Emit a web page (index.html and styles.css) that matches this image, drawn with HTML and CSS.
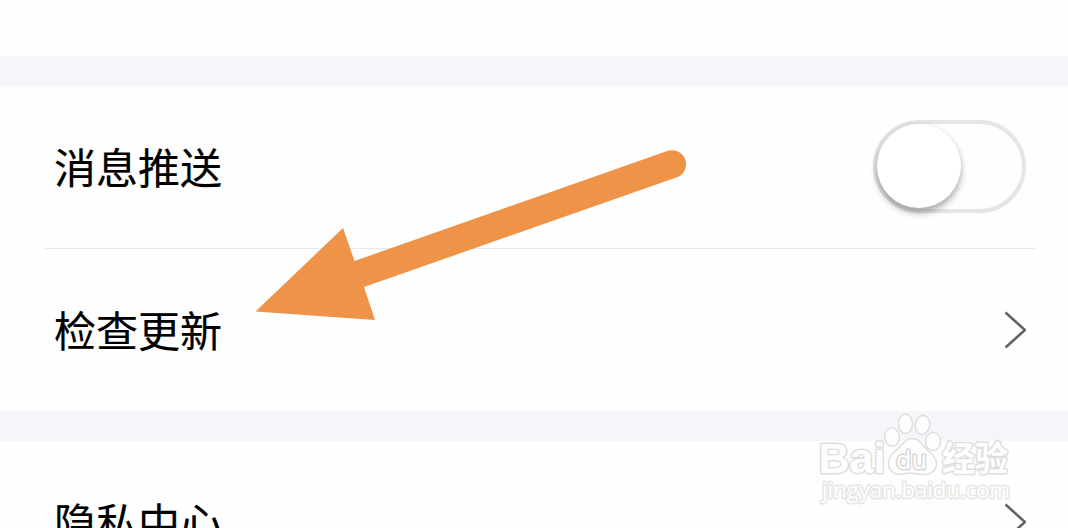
FILE: index.html
```
<!DOCTYPE html>
<html lang="zh-CN">
<head>
    <meta charset="UTF-8">
    <meta name="viewport" content="width=device-width, initial-scale=1.0">
    <title>设置</title>
    <link rel="stylesheet" href="styles.css">
</head>
<body>
    <div class="settings">
        <div class="group group-top"></div>
        <div class="group">
            <div class="row">
                <span class="label">消息推送</span>
                <div class="switch" role="switch" aria-checked="false">
                    <div class="knob"></div>
                </div>
            </div>
            <div class="divider"></div>
            <div class="row">
                <span class="label">检查更新</span>
                <svg class="chevron" width="24" height="40" viewBox="0 0 24 40">
                    <path d="M3.5 2.5 L23 20 L3.5 37.5"/>
                </svg>
            </div>
        </div>
        <div class="group">
            <div class="row">
                <span class="label">隐私中心</span>
                <svg class="chevron" width="24" height="40" viewBox="0 0 24 40">
                    <path d="M3.5 2.5 L23 20 L3.5 37.5"/>
                </svg>
            </div>
        </div>
    </div>

    <svg class="arrow" width="440" height="180" viewBox="250 145 440 180">
        <path d="M255.5 311.5 L343 228 L354.5 261 L668 150.8 A14 14 0 0 1 677 177.3 L364 287 L375 320 Z"/>
    </svg>

    <svg class="watermark" width="210" height="110" viewBox="810 408 210 110">
        <g class="paw">
            <ellipse cx="892" cy="437" rx="7.3" ry="9.3" transform="rotate(-8 892 437)"/>
            <ellipse cx="905.5" cy="423.8" rx="7" ry="9.8"/>
            <ellipse cx="922.5" cy="425" rx="7.2" ry="9.5" transform="rotate(12 922.5 425)"/>
            <ellipse cx="933" cy="441.5" rx="7.5" ry="9"/>
            <path d="M912 438.5 C904 439 902 446 896 450.5 C890 455 887 460 889 467 C892 476 900 474.5 906 473.5 Q912 473 918 474 C926 475.5 933 475 936 467 C938 460 934 456 928 450.5 C922 445 920 438.5 912 438.5 Z"/>
        </g>
        <text class="brand" x="818.5" y="472.5" textLength="67" lengthAdjust="spacingAndGlyphs">Bai</text>
        <text class="du" x="896" y="469" textLength="31" lengthAdjust="spacingAndGlyphs">du</text>
        <text class="brand brand-cn" x="942" y="471" textLength="66" lengthAdjust="spacingAndGlyphs">经验</text>
        <text class="site" x="822" y="498" textLength="188" lengthAdjust="spacingAndGlyphs">jingyan.baidu.com</text>
    </svg>
</body>
</html>
```

FILE: styles.css
```
html {
    overflow: hidden;
}

body {
    margin: 0;
    height: 528px;
    overflow: hidden;
    position: relative;
    background-color: #f5f6fa;
    font-family: "Noto Sans CJK SC", sans-serif;
    color: #000;
}

.settings {
    display: flex;
    flex-direction: column;
    gap: 30px;
    height: 528px;
    overflow: hidden;
}

.group {
    flex-shrink: 0;
    background-color: #fefefe;
}

.group-top {
    height: 56px;
}

.row {
    display: flex;
    align-items: center;
    justify-content: space-between;
    box-sizing: border-box;
    height: 162px;
    padding: 0 42px 0 54px;
}

.label {
    padding-bottom: 2px;
    font-size: 42px;
    line-height: 60px;
    -webkit-text-stroke: 0.2px #000;
}

.divider {
    height: 1px;
    margin: 0 33px 0 45px;
    background-color: #e9e9e9;
}

.switch {
    box-sizing: border-box;
    width: 153px;
    height: 93px;
    margin-bottom: 1px;
    border: 4.5px solid #e4e4e9;
    border-radius: 47px;
}

.knob {
    width: 84px;
    height: 84px;
    border-radius: 50%;
    background-color: #fff;
    box-shadow: 0 5px 7px rgba(0, 0, 0, 0.3), 0 0 6px rgba(0, 0, 0, 0.06);
}

.chevron {
    fill: none;
    stroke: #636363;
    stroke-width: 2.6;
}

.arrow {
    position: absolute;
    left: 250px;
    top: 145px;
    fill: #ee9348;
}

.watermark {
    position: absolute;
    left: 810px;
    top: 408px;
    fill: #fefefe;
    stroke: #dedede;
    stroke-width: 1.5;
}

.watermark text {
    paint-order: stroke;
    stroke-width: 3;
    stroke-linejoin: round;
}

.watermark .brand {
    font-family: "Liberation Sans", sans-serif;
    font-size: 43px;
    font-weight: bold;
}

.watermark .brand-cn {
    font-family: "Noto Sans CJK SC", sans-serif;
    font-size: 34px;
}

.watermark .du {
    stroke: #d6d6d6;
    font-family: "DejaVu Sans", sans-serif;
    font-size: 25px;
}

.watermark .site {
    stroke: #e6e6e6;
    font-family: "Open Sans", sans-serif;
    font-size: 22px;
}
```
